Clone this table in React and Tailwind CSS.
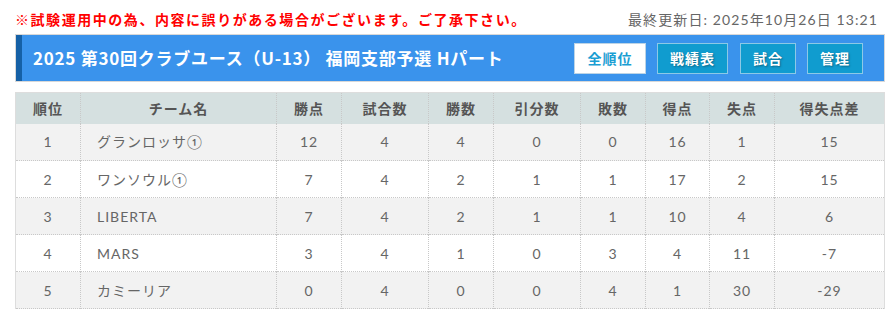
import React from "react";

const columnas = [
  { titulo: "順位", ancho: "w-[65px]" },
  { titulo: "チーム名", ancho: "w-[196px]" },
  { titulo: "勝点", ancho: "w-[65px]" },
  { titulo: "試合数", ancho: "w-[87px]" },
  { titulo: "勝数", ancho: "w-[65px]" },
  { titulo: "引分数", ancho: "w-[87px]" },
  { titulo: "敗数", ancho: "w-[65px]" },
  { titulo: "得点", ancho: "w-[64px]" },
  { titulo: "失点", ancho: "w-[65px]" },
  { titulo: "得失点差", ancho: "" },
];

const equipos = [
  { rango: 1, nombre: "グランロッサ①", datos: [12, 4, 4, 0, 0, 16, 1, 15] },
  { rango: 2, nombre: "ワンソウル①", datos: [7, 4, 2, 1, 1, 17, 2, 15] },
  { rango: 3, nombre: "LIBERTA", datos: [7, 4, 2, 1, 1, 10, 4, 6] },
  { rango: 4, nombre: "MARS", datos: [3, 4, 1, 0, 3, 4, 11, -7] },
  { rango: 5, nombre: "カミーリア", datos: [0, 4, 0, 0, 4, 1, 30, -29] },
];

export default function App() {
  return (
    <div className="w-[895px] h-[328px] bg-white pl-[15px] pr-[10px] pt-[8px] font-['Lato','Noto_Sans_CJK_JP',sans-serif]">
      <div className="flex justify-between items-center h-[22px] pr-[7px]">
        <span className="text-[#ff0000] font-bold text-[14px] tracking-[1.55px] font-['Noto_Sans_CJK_JP',sans-serif]">
          ※試験運用中の為、内容に誤りがある場合がございます。ご了承下さい。
        </span>
        <span className="text-[#666] text-[14px] tracking-[1.1px]">
          最終更新日: 2025年10月26日 13:21
        </span>
      </div>

      <div className="mt-[4px] h-[48px] border border-[#d8d8d8] bg-[#3a93ec] flex items-center">
        <div className="w-[6px] h-full bg-[#1560a6]" />
        <h1 className="flex-1 pl-[11px] text-white font-bold text-[17px] tracking-[0.75px] whitespace-nowrap font-['Noto_Sans_CJK_JP',sans-serif]">
          2025 第30回クラブユース（U-13） 福岡支部予選 Hパート
        </h1>
        <div className="flex shrink-0 pr-[21px]">
          <button className="w-[72px] h-[31px] bg-white border border-[#bcd4e6] text-[#1a9ed3] font-bold text-[14px] tracking-[1px] font-['Noto_Sans_CJK_JP',sans-serif]">
            全順位
          </button>
          <button className="ml-[11px] w-[71px] h-[31px] bg-[#109ccf] border border-[#8cc9e6] text-white font-bold text-[14px] tracking-[1px] [text-shadow:1px_1px_2px_rgba(0,0,0,0.35)] font-['Noto_Sans_CJK_JP',sans-serif]">
            戦績表
          </button>
          <button className="ml-[12px] w-[56px] h-[31px] bg-[#109ccf] border border-[#8cc9e6] text-white font-bold text-[14px] tracking-[1px] [text-shadow:1px_1px_2px_rgba(0,0,0,0.35)] font-['Noto_Sans_CJK_JP',sans-serif]">
            試合
          </button>
          <button className="ml-[11px] w-[56px] h-[31px] bg-[#109ccf] border border-[#8cc9e6] text-white font-bold text-[14px] tracking-[1px] [text-shadow:1px_1px_2px_rgba(0,0,0,0.35)] font-['Noto_Sans_CJK_JP',sans-serif]">
            管理
          </button>
        </div>
      </div>

      <table className="mt-[10px] w-[870px] table-fixed border-collapse border-x border-t border-[#ddd] text-[14px] tracking-[1px]">
        <thead>
          <tr className="h-[31px] bg-[#d5e0e0]">
            {columnas.map((c) => (
              <th
                key={c.titulo}
                className={`${c.ancho} border-r border-dotted border-[#c8c8c8] last:border-r-0 text-[#555] font-bold text-center font-['Noto_Sans_CJK_JP',sans-serif]`}
              >
                {c.titulo}
              </th>
            ))}
          </tr>
        </thead>
        <tbody>
          {equipos.map((e, i) => (
            <tr
              key={e.rango}
              className={`h-[37px] ${i % 2 === 0 ? "bg-[#f2f2f2]" : "bg-white"} border-b border-dotted border-[#c8c8c8]`}
            >
              <td className="border-r border-dotted border-[#c8c8c8] text-center text-[#666]">
                {e.rango}
              </td>
              <td className="border-r border-dotted border-[#c8c8c8] pl-[16px] text-left text-[#666]">
                {e.nombre}
              </td>
              {e.datos.map((d, j) => (
                <td
                  key={j}
                  className="border-r border-dotted border-[#c8c8c8] last:border-r-[#ddd] last:border-solid text-center text-[#666]"
                >
                  {d}
                </td>
              ))}
            </tr>
          ))}
        </tbody>
      </table>
    </div>
  );
}
